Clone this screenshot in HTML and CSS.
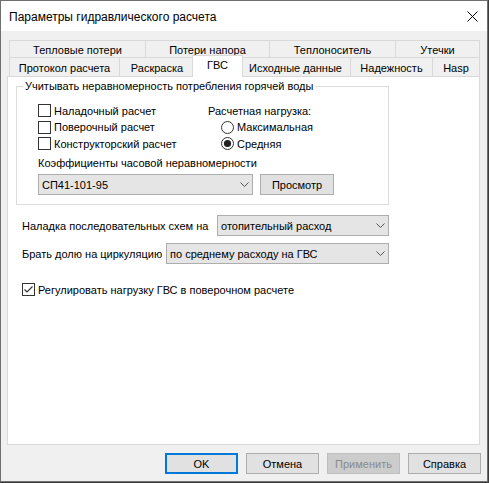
FILE: index.html
```
<!DOCTYPE html>
<html lang="ru">
<head>
<meta charset="utf-8">
<title>Параметры гидравлического расчета</title>
<link rel="stylesheet" href="styles.css">
</head>
<body>
<div class="window">
  <div class="titlebar">
    <span class="title">Параметры гидравлического расчета</span>
    <svg class="close" width="11" height="11" viewBox="0 0 11 11"><path d="M0.5 0.5 L10.5 10.5 M10.5 0.5 L0.5 10.5" stroke="#000" stroke-width="1" fill="none"/></svg>
  </div>
  <div class="content">
    <div class="tabs">
      <div class="tabrow row1">
        <div class="tab w137">Тепловые потери</div>
        <div class="tab w125">Потери напора</div>
        <div class="tab w127">Теплоноситель</div>
        <div class="tab w85">Утечки</div>
      </div>
      <div class="tabrow row2">
        <div class="tab w111">Протокол расчета</div>
        <div class="tab w76">Раскраска</div>
        <div class="tab selected">ГВС</div>
        <div class="tab w111">Исходные данные</div>
        <div class="tab w83">Надежность</div>
        <div class="tab w48">Hasp</div>
      </div>
    </div>
    <div class="panel">
      <div class="group">
        <div class="legend">Учитывать неравномерность потребления горячей воды</div>
        <div class="grid">
          <div class="check"><span class="box"></span><span>Наладочный расчет</span></div>
          <div class="caption">Расчетная нагрузка:</div>
          <div class="check"><span class="box"></span><span>Поверочный расчет</span></div>
          <div class="radio"><svg width="13" height="13" viewBox="0 0 13 13"><circle cx="6.5" cy="6.5" r="6" fill="#fff" stroke="#333"/></svg><span>Максимальная</span></div>
          <div class="check"><span class="box"></span><span>Конструкторский расчет</span></div>
          <div class="radio"><svg width="13" height="13" viewBox="0 0 13 13"><circle cx="6.5" cy="6.5" r="6" fill="#fff" stroke="#333"/><circle cx="6.5" cy="6.5" r="3.6" fill="#222"/></svg><span>Средняя</span></div>
        </div>
        <div class="coef-label">Коэффициенты часовой неравномерности</div>
        <div class="coef-row">
          <div class="combo w215"><span>СП41-101-95</span><svg width="9" height="5" viewBox="0 0 9 5"><path d="M0.5 0.5 L4.5 4.5 L8.5 0.5" stroke="#555" fill="none"/></svg></div>
          <div class="btn view">Просмотр</div>
        </div>
      </div>
      <div class="field-row first">
        <span class="flabel l195">Наладка последовательных схем на</span>
        <div class="combo w172"><span>отопительный расход</span><svg width="9" height="5" viewBox="0 0 9 5"><path d="M0.5 0.5 L4.5 4.5 L8.5 0.5" stroke="#555" fill="none"/></svg></div>
      </div>
      <div class="field-row second">
        <span class="flabel l144">Брать долю на циркуляцию</span>
        <div class="combo w223"><span>по среднему расходу на ГВС</span><svg width="9" height="5" viewBox="0 0 9 5"><path d="M0.5 0.5 L4.5 4.5 L8.5 0.5" stroke="#555" fill="none"/></svg></div>
      </div>
      <div class="check regul"><svg class="cbox" width="13" height="13" viewBox="0 0 13 13"><rect x="0.5" y="0.5" width="12" height="12" fill="#fff" stroke="#333"/><path d="M2.5 6.5 L5 9 L10.5 3.5" stroke="#333" stroke-width="1.2" fill="none"/></svg><span>Регулировать нагрузку ГВС в поверочном расчете</span></div>
    </div>
    <div class="buttons">
      <div class="btn dlg default">OK</div>
      <div class="btn dlg">Отмена</div>
      <div class="btn dlg disabled">Применить</div>
      <div class="btn dlg">Справка</div>
    </div>
  </div>
</div>
</body>
</html>
```
FILE: styles.css
```
* { box-sizing: border-box; }
html, body { margin: 0; padding: 0; }
body {
  width: 489px;
  height: 483px;
  background: #3c3c3c;
  font-family: "Liberation Sans", Arial, sans-serif;
  font-size: 11px;
  color: #000;
}
.window {
  width: 488px;
  height: 482px;
  border: 1px solid #6f6f6f;
  background: #f0f0f0;
  display: flex;
  flex-direction: column;
}
.titlebar {
  height: 30px;
  flex: none;
  background: #fff;
  display: flex;
  align-items: center;
  justify-content: space-between;
  padding: 1px 9px 0 8px;
}
.title { font-size: 12px; line-height: 14px; }
.close { display: block; }
.content {
  flex: 1;
  padding: 9px 7px 0 6px;
  display: flex;
  flex-direction: column;
}
.tabs { margin-left: 2px; }
.tabrow { display: flex; align-items: flex-start; }
.row1 { height: 17px; }
.row2 { height: 19px; }
.tab {
  border: 1px solid #d9d9d9;
  border-bottom: none;
  background: #f0f0f0;
  margin-right: -1px;
  text-align: center;
  white-space: nowrap;
  line-height: 16px;
}
.row1 .tab { height: 17px; padding-top: 1px; }
.row2 .tab { height: 19px; padding-top: 2px; }
.row2 .tab.selected {
  width: 51px;
  height: 22px;
  margin-top: -2px;
  margin-left: -2px;
  margin-right: -3px;
  padding-top: 1px;
  background: #fff;
  z-index: 2;
}
.w137 { width: 137px; }
.w125 { width: 125px; }
.w127 { width: 127px; }
.w85 { width: 85px; }
.w111 { width: 111px; }
.w76 { width: 76px; }
.w83 { width: 83px; }
.w48 { width: 48px; }
.panel {
  width: 473px;
  height: 369px;
  border: 1px solid #d9d9d9;
  background: #fff;
  flex: none;
}
.group {
  margin: 9px 0 0 8px;
  width: 373px;
  height: 119px;
  border: 1px solid #dcdcdc;
  padding: 0 0 0 21px;
}
.legend {
  display: table;
  margin: -8px 0 0 -15px;
  padding: 0 2px;
  line-height: 14px;
  background: #fff;
  white-space: nowrap;
}
.grid {
  margin-top: 9px;
  display: grid;
  grid-template-columns: 170px auto;
  grid-template-rows: 17px 16px 17px;
}
.check, .radio { display: flex; align-items: center; gap: 3px; line-height: 14px; }
.box {
  width: 13px;
  height: 13px;
  border: 1px solid #333;
  background: #fff;
  flex: none;
}
.caption { line-height: 14px; display: flex; align-items: center; }
.radio { margin-left: 13px; gap: 3px; }
.radio svg { display: block; flex: none; }
.coef-label { margin-top: 4px; line-height: 14px; }
.coef-row { margin-top: 4px; display: flex; }
.combo {
  height: 21px;
  background: #e5e5e5;
  border: 1px solid #adadad;
  display: flex;
  align-items: center;
  justify-content: space-between;
  padding: 0 3px 0 3px;
  white-space: nowrap;
}
.combo svg { display: block; flex: none; }
.w215 { width: 215px; }
.w172 { width: 172px; }
.w223 { width: 223px; }
.btn {
  height: 21px;
  background: #e1e1e1;
  border: 1px solid #adadad;
  display: flex;
  align-items: center;
  justify-content: center;
  white-space: nowrap;
}
.view { width: 74px; margin-left: 7px; }
.field-row { display: flex; align-items: center; margin-left: 14px; }
.field-row.first { margin-top: 10px; }
.field-row.second { margin-top: 7px; }
.flabel { padding-top: 1px; line-height: 14px; white-space: nowrap; }
.l195 { width: 195px; }
.l144 { width: 144px; }
.regul { margin: 19px 0 0 14px; height: 13px; gap: 3px; }
.cbox { display: block; flex: none; }
.buttons {
  margin-top: 8px;
  margin-right: -1px;
  display: flex;
  justify-content: flex-end;
  gap: 8px;
}
.dlg { width: 73px; }
.default { border: 2px solid #0078d7; }
.disabled { background: #cccccc; border-color: #bfbfbf; color: #8a8a8a; }
```
